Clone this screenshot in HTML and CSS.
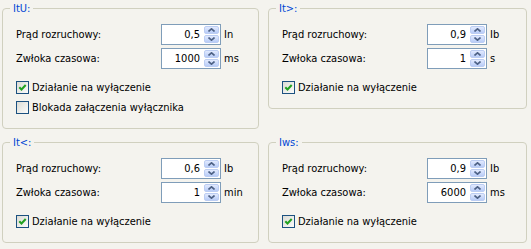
FILE: index.html
```html
<!DOCTYPE html>
<html lang="pl">
<head>
    <meta charset="UTF-8">
    <title>Ustawienia zabezpieczeń</title>
    <link rel="stylesheet" href="styles.css">
</head>
<body>
    <div class="page">
        <fieldset class="group">
            <legend>ItU:</legend>
            <div class="content">
                <div class="fields">
                    <span class="name">Prąd rozruchowy:</span>
                    <div class="spin"><span class="value">0,5</span><span class="arrows"><span class="arrow"><svg width="7" height="4" viewBox="0 0 7 4"><polyline points="0.5,3.5 3.5,0.8 6.5,3.5"/></svg></span><span class="arrow"><svg width="7" height="4" viewBox="0 0 7 4"><polyline points="0.5,0.5 3.5,3.2 6.5,0.5"/></svg></span></span></div>
                    <span class="unit">In</span>
                    <span class="name">Zwłoka czasowa:</span>
                    <div class="spin"><span class="value">1000</span><span class="arrows"><span class="arrow"><svg width="7" height="4" viewBox="0 0 7 4"><polyline points="0.5,3.5 3.5,0.8 6.5,3.5"/></svg></span><span class="arrow"><svg width="7" height="4" viewBox="0 0 7 4"><polyline points="0.5,0.5 3.5,3.2 6.5,0.5"/></svg></span></span></div>
                    <span class="unit">ms</span>
                </div>
                <div class="checks">
                    <label class="check"><span class="box checked"><svg width="11" height="11" viewBox="0 0 11 11"><polyline points="2.3,5.2 4.5,7.5 8.7,3"/></svg></span>Działanie na wyłączenie</label>
                    <label class="check"><span class="box"></span>Blokada załączenia wyłącznika</label>
                </div>
            </div>
        </fieldset>

        <fieldset class="group short">
            <legend>It&gt;:</legend>
            <div class="content">
                <div class="fields">
                    <span class="name">Prąd rozruchowy:</span>
                    <div class="spin"><span class="value">0,9</span><span class="arrows"><span class="arrow"><svg width="7" height="4" viewBox="0 0 7 4"><polyline points="0.5,3.5 3.5,0.8 6.5,3.5"/></svg></span><span class="arrow"><svg width="7" height="4" viewBox="0 0 7 4"><polyline points="0.5,0.5 3.5,3.2 6.5,0.5"/></svg></span></span></div>
                    <span class="unit">Ib</span>
                    <span class="name">Zwłoka czasowa:</span>
                    <div class="spin"><span class="value">1</span><span class="arrows"><span class="arrow"><svg width="7" height="4" viewBox="0 0 7 4"><polyline points="0.5,3.5 3.5,0.8 6.5,3.5"/></svg></span><span class="arrow"><svg width="7" height="4" viewBox="0 0 7 4"><polyline points="0.5,0.5 3.5,3.2 6.5,0.5"/></svg></span></span></div>
                    <span class="unit">s</span>
                </div>
                <div class="checks">
                    <label class="check"><span class="box checked"><svg width="11" height="11" viewBox="0 0 11 11"><polyline points="2.3,5.2 4.5,7.5 8.7,3"/></svg></span>Działanie na wyłączenie</label>
                </div>
            </div>
        </fieldset>

        <fieldset class="group">
            <legend>It&lt;:</legend>
            <div class="content">
                <div class="fields">
                    <span class="name">Prąd rozruchowy:</span>
                    <div class="spin"><span class="value">0,6</span><span class="arrows"><span class="arrow"><svg width="7" height="4" viewBox="0 0 7 4"><polyline points="0.5,3.5 3.5,0.8 6.5,3.5"/></svg></span><span class="arrow"><svg width="7" height="4" viewBox="0 0 7 4"><polyline points="0.5,0.5 3.5,3.2 6.5,0.5"/></svg></span></span></div>
                    <span class="unit">Ib</span>
                    <span class="name">Zwłoka czasowa:</span>
                    <div class="spin"><span class="value">1</span><span class="arrows"><span class="arrow"><svg width="7" height="4" viewBox="0 0 7 4"><polyline points="0.5,3.5 3.5,0.8 6.5,3.5"/></svg></span><span class="arrow"><svg width="7" height="4" viewBox="0 0 7 4"><polyline points="0.5,0.5 3.5,3.2 6.5,0.5"/></svg></span></span></div>
                    <span class="unit">min</span>
                </div>
                <div class="checks">
                    <label class="check"><span class="box checked"><svg width="11" height="11" viewBox="0 0 11 11"><polyline points="2.3,5.2 4.5,7.5 8.7,3"/></svg></span>Działanie na wyłączenie</label>
                </div>
            </div>
        </fieldset>

        <fieldset class="group">
            <legend>Iws:</legend>
            <div class="content">
                <div class="fields">
                    <span class="name">Prąd rozruchowy:</span>
                    <div class="spin"><span class="value">0,9</span><span class="arrows"><span class="arrow"><svg width="7" height="4" viewBox="0 0 7 4"><polyline points="0.5,3.5 3.5,0.8 6.5,3.5"/></svg></span><span class="arrow"><svg width="7" height="4" viewBox="0 0 7 4"><polyline points="0.5,0.5 3.5,3.2 6.5,0.5"/></svg></span></span></div>
                    <span class="unit">Ib</span>
                    <span class="name">Zwłoka czasowa:</span>
                    <div class="spin"><span class="value">6000</span><span class="arrows"><span class="arrow"><svg width="7" height="4" viewBox="0 0 7 4"><polyline points="0.5,3.5 3.5,0.8 6.5,3.5"/></svg></span><span class="arrow"><svg width="7" height="4" viewBox="0 0 7 4"><polyline points="0.5,0.5 3.5,3.2 6.5,0.5"/></svg></span></span></div>
                    <span class="unit">ms</span>
                </div>
                <div class="checks">
                    <label class="check"><span class="box checked"><svg width="11" height="11" viewBox="0 0 11 11"><polyline points="2.3,5.2 4.5,7.5 8.7,3"/></svg></span>Działanie na wyłączenie</label>
                </div>
            </div>
        </fieldset>
    </div>
</body>
</html>
```

FILE: styles.css
```css
body {
    margin: 0;
    background-color: #f4f3ee;
    font-family: "DejaVu Sans Condensed", "DejaVu Sans", sans-serif;
    font-size: 11px;
    color: #000;
}
.page {
    display: grid;
    grid-template-columns: 257px 259px;
    grid-template-rows: 127px 107px;
    column-gap: 9px;
    row-gap: 7px;
    padding: 2px 0 0 2px;
}
.group {
    margin: 0;
    padding: 0;
    min-width: 0;
    box-sizing: border-box;
    border: 1px solid #d0d0bf;
    border-radius: 4px;
}
.group.short {
    align-self: start;
    height: 107px;
}
.group legend {
    margin-left: 7px;
    padding: 0 3px;
    color: #0046d5;
    line-height: 13px;
}
.content {
    padding: 9px 0 0 13px;
}
.fields {
    display: grid;
    grid-template-columns: 145px 60px auto;
    row-gap: 3px;
    align-items: center;
}
.unit {
    padding-left: 3px;
}
.spin {
    display: flex;
    align-items: center;
    box-sizing: border-box;
    height: 21px;
    padding: 1px;
    border: 1px solid #7f9db9;
    background-color: #fff;
}
.value {
    flex: 1;
    text-align: right;
    padding-right: 4px;
}
.arrows {
    display: flex;
    flex-direction: column;
    gap: 1px;
    width: 15px;
    height: 17px;
}
.arrow {
    flex: 1;
    display: flex;
    align-items: center;
    justify-content: center;
    box-sizing: border-box;
    border: 1px solid #bccdf3;
    border-radius: 2px;
    background: linear-gradient(#e2eafe, #b8ccf7);
}
.arrow polyline {
    fill: none;
    stroke: #4d6185;
    stroke-width: 1.6;
}
.checks {
    margin-top: 8px;
}
.check {
    display: flex;
    align-items: center;
    gap: 3px;
    height: 20px;
}
.box {
    display: flex;
    align-items: center;
    justify-content: center;
    box-sizing: border-box;
    width: 13px;
    height: 13px;
    border: 1px solid #1c5180;
    background: linear-gradient(135deg, #dcdcd5, #fbfbfa);
}
.box polyline {
    fill: none;
    stroke: #21a121;
    stroke-width: 2;
}
```
